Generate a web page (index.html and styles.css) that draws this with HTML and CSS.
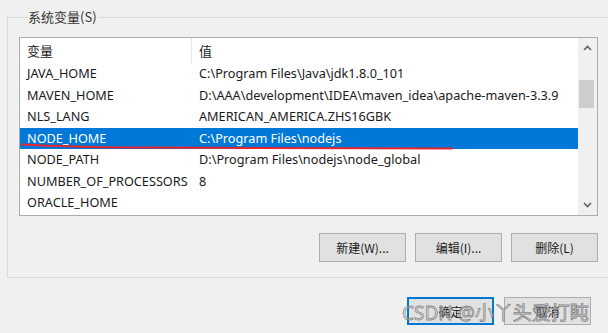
FILE: index.html
```html
<!DOCTYPE html>
<html>
<head>
    <title>系统变量</title>
    <link rel="stylesheet" href="styles.css">
</head>
<body>
    <div class="dialog">
        <fieldset class="group">
            <legend>系统变量(S)</legend>
            <div class="listbox">
                <div class="list">
                    <div class="row head">
                        <span class="c1">变量</span>
                        <span class="c2">值</span>
                    </div>
                    <div class="row"><span class="c1">JAVA_HOME</span><span class="c2">C:\Program Files\Java\jdk1.8.0_101</span></div>
                    <div class="row"><span class="c1">MAVEN_HOME</span><span class="c2">D:\AAA\development\IDEA\maven_idea\apache-maven-3.3.9</span></div>
                    <div class="row"><span class="c1">NLS_LANG</span><span class="c2">AMERICAN_AMERICA.ZHS16GBK</span></div>
                    <div class="row selected"><span class="c1">NODE_HOME</span><span class="c2">C:\Program Files\nodejs</span></div>
                    <div class="row"><span class="c1">NODE_PATH</span><span class="c2">D:\Program Files\nodejs\node_global</span></div>
                    <div class="row"><span class="c1">NUMBER_OF_PROCESSORS</span><span class="c2">8</span></div>
                    <div class="row"><span class="c1">ORACLE_HOME</span><span class="c2"></span></div>
                </div>
                <div class="scrollbar">
                    <div class="arrow">
                        <svg width="9" height="6" viewBox="0 0 9 6"><polyline points="1,5 4.5,1.5 8,5" fill="none" stroke="#606060" stroke-width="1.6"/></svg>
                    </div>
                    <div class="track"><div class="thumb"></div></div>
                    <div class="arrow">
                        <svg width="9" height="6" viewBox="0 0 9 6"><polyline points="1,1 4.5,4.5 8,1" fill="none" stroke="#606060" stroke-width="1.6"/></svg>
                    </div>
                </div>
            </div>
            <div class="actions">
                <button class="btn">新建(W)...</button>
                <button class="btn">编辑(I)...</button>
                <button class="btn">删除(L)</button>
            </div>
        </fieldset>
        <div class="footer">
            <button class="btn btn-default">确定</button>
            <button class="btn">取消</button>
        </div>

        <!-- hand-drawn annotation -->
        <svg class="underline" width="608" height="333">
            <path d="M22 144.5 Q 70 147 140 147.6 L 452 148.4" fill="none" stroke="#e8252e" stroke-width="2" stroke-linecap="round"/>
        </svg>
        <div class="watermark">CSDN @小丫头爱打盹</div>
    </div>
</body>
</html>
```

FILE: styles.css
```css
body {
    margin: 0;
    background: #f0f0f0;
    font-family: "Noto Sans", "Noto Sans CJK SC", sans-serif;
    font-size: 13px;
    color: #1a1a1a;
    overflow: hidden;
}
.dialog {
    position: relative;
    box-sizing: border-box;
    width: 608px;
    height: 333px;
    padding-top: 8px;
}
.group {
    box-sizing: border-box;
    width: 603px;
    margin: 0 0 0 7px;
    padding: 11px 11px 15px 11px;
    border: 1px solid #d9d9d9;
}
.group legend {
    padding: 0 1px;
    margin-left: 8px;
    line-height: 18px;
    font-family: "Noto Sans CJK SC", sans-serif;
    color: #333;
}
.listbox {
    display: flex;
    width: 579px;
    height: 179px;
    box-sizing: border-box;
    border: 1px solid #adadad;
    background: white;
    overflow: hidden;
}
.list {
    flex: 1;
    font-size: 12.7px;
}
.row {
    display: flex;
    height: 21.5px;
    line-height: 21.5px;
    white-space: nowrap;
}
.row.head {
    height: 25px;
    line-height: 25px;
    font-size: 13px;
    font-family: "Noto Sans CJK SC", sans-serif;
}
.row.head .c1 {
    border-right: 1px solid #e5e5e5;
}
.c1 {
    box-sizing: border-box;
    width: 172px;
    padding-left: 7px;
}
.c2 {
    padding-left: 7px;
}
.row.selected {
    background: #0078d7;
    color: white;
}
.scrollbar {
    width: 19px;
    display: flex;
    flex-direction: column;
    background: #f0f0f0;
}
.arrow {
    height: 20px;
    display: flex;
    align-items: center;
    justify-content: center;
}
.track {
    flex: 1;
}
.thumb {
    margin: 22px 3px 0 1px;
    height: 28px;
    background: #cdcdcd;
}
.actions {
    display: flex;
    justify-content: flex-end;
    gap: 9px;
    margin-top: 17px;
    width: 579px;
}
.btn {
    box-sizing: border-box;
    width: 87px;
    height: 29px;
    border: 1px solid #adadad;
    background: #e1e1e1;
    font-family: "Noto Sans CJK SC", sans-serif;
    font-size: 12px;
    color: #1a1a1a;
    padding: 0;
}
.btn-default {
    border: 2px solid #0078d7;
}
.footer {
    display: flex;
    justify-content: flex-end;
    gap: 10px;
    margin-top: 19px;
    padding-right: 17px;
}
.footer .btn {
    width: 87px;
    height: 28px;
}
.underline {
    position: absolute;
    left: 0;
    top: 0;
    pointer-events: none;
}
.watermark {
    position: absolute;
    left: 402px;
    top: 300px;
    font-family: "Noto Sans", "Noto Sans CJK SC", sans-serif;
    font-size: 19px;
    line-height: 26px;
    color: rgba(235, 235, 235, 0.55);
    -webkit-text-stroke: 0.8px rgba(100, 100, 100, 0.75);
    white-space: nowrap;
}
```
